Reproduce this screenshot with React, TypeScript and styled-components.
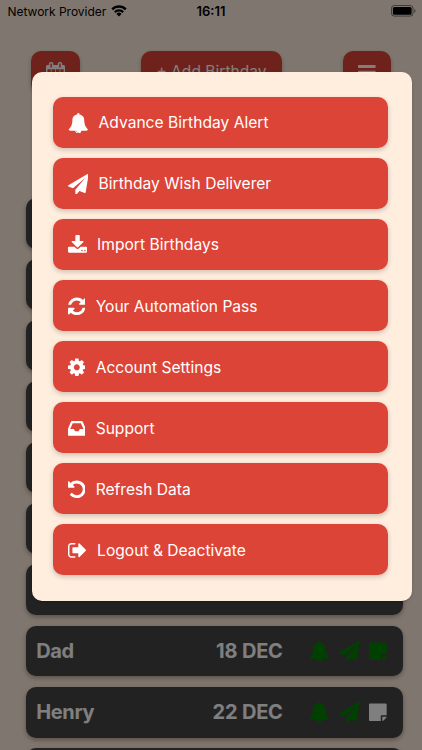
import React from "react";
import styled, { createGlobalStyle } from "styled-components";

const GlobalStyle = createGlobalStyle`
  * { box-sizing: border-box; }
  html, body { margin: 0; padding: 0; }
  body { font-family: Inter, "Liberation Sans", sans-serif; overflow: hidden; }
`;

const glyphs = {
  bell: { w: 1792, d: "M912 1696q0-16-16-16-59 0-101.5-42.5t-42.5-101.5q0-16-16-16t-16 16q0 73 51.5 124.5t124.5 51.5q16 0 16-16zm816-288q0 52-38 90t-90 38h-448q0 106-75 181t-181 75-181-75-75-181h-448q-52 0-90-38t-38-90q50-42 91-88t85-119.5 74.5-158.5 50-206 19.5-260q0-152 117-282.5t307-158.5q-8-19-8-39 0-40 28-68t68-28 68 28 28 68q0 20-8 39 190 28 307 158.5t117 282.5q0 139 19.5 260t50 206 74.5 158.5 85 119.5 91 88z" },
  plane: { w: 1792, d: "M1764 11q33 24 27 64l-256 1536q-5 29-32 45-14 8-31 8-11 0-24-5l-453-185-242 295q-18 23-49 23-13 0-22-4-19-7-30.5-23.5t-11.5-36.5v-349l864-1059-1069 925-395-162q-37-14-40-55-2-40 32-59l1664-960q15-9 32-9 20 0 36 11z" },
  download: { w: 1664, x: 64, d: "M1344 1344q0-26-19-45t-45-19-45 19-19 45 19 45 45 19 45-19 19-45zm256 0q0-26-19-45t-45-19-45 19-19 45 19 45 45 19 45-19 19-45zm128-224v320q0 40-28 68t-68 28h-1472q-40 0-68-28t-28-68v-320q0-40 28-68t68-28h465l135 136q58 56 136 56t136-56l136-136h464q40 0 68 28t28 68zm-325-569q17 41-14 70l-448 448q-18 19-45 19t-45-19l-448-448q-31-29-14-70 17-39 59-39h256v-448q0-26 19-45t45-19h256q26 0 45 19t19 45v448h256q42 0 59 39z" },
  refresh: { w: 1536, d: "M1511 1056q0 5-1 7-64 268-268 434.5t-478 166.5q-146 0-282.5-55t-243.5-157l-129 129q-19 19-45 19t-45-19-19-45v-448q0-26 19-45t45-19h448q26 0 45 19t19 45-19 45l-137 137q71 66 161 102t187 36q134 0 250-65t186-179q11-17 53-117 8-23 30-23h192q13 0 22.5 9.5t9.5 22.5zm25-800v448q0 26-19 45t-45 19h-448q-26 0-45-19t-19-45 19-45l138-138q-148-137-349-137-134 0-250 65t-186 179q-11 17-53 117-8 23-30 23h-199q-13 0-22.5-9.5t-9.5-22.5v-7q65-268 270-434.5t480-166.5q146 0 284 55.5t245 156.5l130-129q19-19 45-19t45 19 19 45z" },
  cog: { w: 1536, d: "M1024 896q0-106-75-181t-181-75-181 75-75 181 75 181 181 75 181-75 75-181zm512-109v222q0 12-8 23t-20 13l-185 28q-19 54-39 91 35 50 107 138 10 12 10 25t-9 23q-27 37-99 108t-94 71q-12 0-26-9l-138-108q-44 23-91 38-16 136-29 186-7 28-36 28h-222q-14 0-24.5-8.5t-11.5-21.5l-28-184q-49-16-90-37l-141 107q-10 9-25 9-14 0-25-11-126-114-165-168-7-10-7-23 0-12 8-23 15-21 51-66.5t54-70.5q-27-50-41-99l-183-27q-13-2-21-12.5t-8-23.5v-222q0-12 8-23t19-13l186-28q14-46 39-92-40-57-107-138-10-12-10-24 0-10 9-23 26-36 98.5-107.5t94.5-71.5q13 0 26 10l138 107q44-23 91-38 16-136 29-186 7-28 36-28h222q14 0 24.5 8.5t11.5 21.5l28 184q49 16 90 37l142-107q9-9 24-9 13 0 25 10 129 119 165 170 7 8 7 22 0 12-8 23-15 21-51 66.5t-54 70.5q26 50 41 98l183 28q13 2 21 12.5t8 23.5z" },
  inbox: { w: 1536, d: "M1023 960h316q-1-3-2.5-8.5t-2.5-7.5l-212-496h-708l-212 496q-1 3-2.5 8.5t-2.5 7.5h316l95 192h320zm513 30v482q0 26-19 45t-45 19h-1408q-26 0-45-19t-19-45v-482q0-62 25-123l238-552q10-25 36.5-42t52.5-17h832q26 0 52.5 17t36.5 42l238 552q25 61 25 123z" },
  undo: { w: 1536, d: "M1536 896q0 156-61 298t-164 245-245 164-298 61q-172 0-327-72.5t-264-204.5q-7-10-6.5-22.5t8.5-20.5l137-138q10-9 25-9 16 2 23 12 73 95 179 147t225 52q104 0 198.5-40.5t163.5-109.5 109.5-163.5 40.5-198.5-40.5-198.5-109.5-163.5-163.5-109.5-198.5-40.5q-98 0-188 35.5t-160 101.5l137 138q31 30 14 69-17 40-59 40h-448q-26 0-45-19t-19-45v-448q0-42 40-59 39-17 69 14l130 129q107-101 244.5-156.5t284.5-55.5q156 0 298 61t245 164 164 245 61 298z" },
  signOut: { w: 1664, d: "M640 1440q0 4 1 20t.5 26.5-3 23.5-10 19.5-20.5 6.5h-320q-119 0-203.5-84.5t-84.5-203.5v-704q0-119 84.5-203.5t203.5-84.5h320q13 0 22.5 9.5t9.5 22.5q0 4 1 20t.5 26.5-3 23.5-10 19.5-20.5 6.5h-320q-66 0-113 47t-47 113v704q0 66 47 113t113 47h312l11.5 1 11.5 3 8 5.5 7 9 2 13.5zm928-544q0 26-19 45l-544 544q-19 19-45 19t-45-19-19-45v-288h-448q-26 0-45-19t-19-45v-384q0-26 19-45t45-19h448v-288q0-26 19-45t45-19 45 19l544 544q19 19 19 45z" },
  note: { w: 1536, d: "M1024 1248v416h-928q-40 0-68-28t-28-68v-1344q0-40 28-68t68-28h1344q40 0 68 28t28 68v928h-416q-40 0-68 28t-28 68zm128 32h381q-15 82-65 132l-184 184q-50 50-132 65v-381z" },
  calendar: { w: 1664, d: "M128 1664h288v-288h-288v288zm352 0h320v-288h-320v288zm-352-352h288v-320h-288v320zm352 0h320v-320h-320v320zm-352-384h288v-288h-288v288zm736 736h320v-288h-320v288zm-384-736h320v-288h-320v288zm768 736h288v-288h-288v288zm-384-352h320v-320h-320v320zm-352-864v-288q0-13-9.5-22.5t-22.5-9.5h-64q-13 0-22.5 9.5t-9.5 22.5v288q0 13 9.5 22.5t22.5 9.5h64q13 0 22.5-9.5t9.5-22.5zm736 864h288v-320h-288v320zm-384-384h320v-288h-320v288zm384 0h288v-288h-288v288zm32-480v-288q0-13-9.5-22.5t-22.5-9.5h-64q-13 0-22.5 9.5t-9.5 22.5v288q0 13 9.5 22.5t22.5 9.5h64q13 0 22.5-9.5t9.5-22.5zm384-64v1280q0 52-38 90t-90 38h-1408q-52 0-90-38t-38-90v-1280q0-52 38-90t90-38h128v-96q0-66 47-113t113-47h64q66 0 113 47t47 113v96h384v-96q0-66 47-113t113-47h64q66 0 113 47t47 113v96h128q52 0 90 38t38 90z" },
  bars: { w: 1536, d: "M1536 1344v128q0 26-19 45t-45 19h-1408q-26 0-45-19t-19-45v-128q0-26 19-45t45-19h1408q26 0 45 19t19 45zm0-512v128q0 26-19 45t-45 19h-1408q-26 0-45-19t-19-45v-128q0-26 19-45t45-19h1408q26 0 45 19t19 45zm0-512v128q0 26-19 45t-45 19h-1408q-26 0-45-19t-19-45v-128q0-26 19-45t45-19h1408q26 0 45 19t19 45z" },
} as const;

type GlyphName = keyof typeof glyphs;

const Svg = styled.svg`
  display: block;
  flex: none;
  fill: currentColor;
`;

function Glyph({ name, size = 20.6 }: { name: GlyphName; size?: number }) {
  const g: { w: number; d: string; x?: number } = glyphs[name];
  return (
    <Svg width={(g.w / 1792) * size} height={size} viewBox={`${g.x ?? 0} 0 ${g.w} 1792`}>
      <path d={g.d} />
    </Svg>
  );
}

const Screen = styled.main`
  position: relative;
  width: 422px;
  height: 750px;
  overflow: hidden;
  background: #ffeede;
`;

const StatusBar = styled.header`
  display: grid;
  grid-template-columns: 1fr auto 1fr;
  align-items: center;
  height: 22px;
  padding: 0 6px 0 7.5px;
  font-size: 12px;
  color: #000;
`;

const Carrier = styled.div`
  display: flex;
  align-items: center;
  gap: 4.5px;
  letter-spacing: -0.02px;
`;

const Clock = styled.div`
  font-weight: 600;
  font-size: 13px;
  margin-right: 1.5px;
`;

const BatterySlot = styled.div`
  display: flex;
  justify-content: flex-end;
`;

const Toolbar = styled.nav`
  display: flex;
  justify-content: space-between;
  padding: 51px 31px 0;
`;

const ToolButton = styled.button<{ $width: number }>`
  display: flex;
  align-items: center;
  justify-content: center;
  width: ${(p) => p.$width}px;
  height: 42px;
  padding: 0;
  border: 0;
  border-radius: 10px;
  background: #dc4437;
  color: #fff;
  font: 400 15.6px Inter, sans-serif;
  white-space: nowrap;
  box-shadow: 0 2px 4px rgba(0, 0, 0, 0.25);
`;

const ToolLabel = styled.span`
  padding-bottom: 2px;
`;

const BirthdayList = styled.section`
  display: flex;
  flex-direction: column;
  gap: 10.2px;
  margin: 105px 19.5px 0 26px;
`;

const BirthdayRow = styled.article`
  display: flex;
  align-items: center;
  flex: none;
  height: 50.9px;
  padding: 0 15.6px 0 10.2px;
  border-radius: 10px;
  background: #454545;
  color: #fff;
  font-size: 20px;
  font-weight: 700;
  box-shadow: 0 2px 5px rgba(40, 0, 0, 0.35);
`;

const PersonName = styled.span`
  flex: 1;
  letter-spacing: -0.35px;
`;

const BirthDate = styled.span`
  margin-right: 26.2px;
  letter-spacing: -0.2px;
`;

const Indicators = styled.div`
  display: flex;
  align-items: center;
  gap: 9.6px;
`;

const Indicator = styled.span<{ $active: boolean }>`
  color: ${(p) => (p.$active ? "#008000" : "#fff")};
`;

const Backdrop = styled.div`
  position: absolute;
  inset: 0;
  padding: 71.5px 10.5px 0 32.3px;
  background: rgba(0, 0, 0, 0.5);
`;

const SystemLayer = styled.div`
  position: absolute;
  inset: 0 0 auto;
`;

const MenuPanel = styled.div`
  display: flex;
  flex-direction: column;
  gap: 10.2px;
  height: 529.5px;
  padding: 25.4px 23.8px 0 20.5px;
  border-radius: 10px;
  background: #ffeede;
  box-shadow: 0 1px 3px rgba(0, 0, 0, 0.2);
`;

const MenuItem = styled.button`
  display: flex;
  align-items: center;
  flex: none;
  gap: 10.3px;
  height: 50.9px;
  padding: 1px 14.9px 0;
  border: 0;
  border-radius: 10px;
  background: #dc4437;
  color: #fff;
  font: 400 15.6px Inter, sans-serif;
  box-shadow: 0 2px 5px rgba(0, 0, 0, 0.2);
`;

const menu: { icon: GlyphName; label: string }[] = [
  { icon: "bell", label: "Advance Birthday Alert" },
  { icon: "plane", label: "Birthday Wish Deliverer" },
  { icon: "download", label: "Import Birthdays" },
  { icon: "refresh", label: "Your Automation Pass" },
  { icon: "cog", label: "Account Settings" },
  { icon: "inbox", label: "Support" },
  { icon: "undo", label: "Refresh Data" },
  { icon: "signOut", label: "Logout & Deactivate" },
];

const people = [
  { name: "Dad", date: "18 DEC", note: true },
  { name: "Henry", date: "22 DEC", note: false },
];

const coveredRows = [0, 1, 2, 3, 4, 5, 6];

function WifiIcon() {
  return (
    <svg width="16" height="12" viewBox="0 0 16 12" fill="none" stroke="#000">
      <path d="M1.2 4.3a9.7 9.7 0 0 1 13.6 0" strokeWidth="2.4" />
      <path d="M3.8 7.1a6 6 0 0 1 8.4 0" strokeWidth="2.2" />
      <path d="M8 11.4 5.5 8.9a3.5 3.5 0 0 1 5 0z" fill="#000" stroke="none" />
    </svg>
  );
}

function BatteryIcon() {
  return (
    <svg width="25" height="12" viewBox="0 0 25 12">
      <rect x=".5" y=".5" width="21.5" height="10.6" rx="2.8" fill="none" stroke="#000" strokeOpacity=".5" />
      <rect x="1.9" y="1.9" width="18.7" height="7.8" rx="1.5" />
      <path d="M23.3 4v3.8c1.7-.7 1.7-3.1 0-3.8z" opacity=".5" />
    </svg>
  );
}

export default function App() {
  return (
    <>
      <GlobalStyle />
      <Screen>
        <Toolbar>
          <ToolButton $width={49}><Glyph name="calendar" /></ToolButton>
          <ToolButton $width={141}><ToolLabel>+ Add Birthday</ToolLabel></ToolButton>
          <ToolButton $width={48}><Glyph name="bars" /></ToolButton>
        </Toolbar>
        <BirthdayList>
          {coveredRows.map((row) => <BirthdayRow key={row} />)}
          {people.map((p) => (
            <BirthdayRow key={p.name}>
              <PersonName>{p.name}</PersonName>
              <BirthDate>{p.date}</BirthDate>
              <Indicators>
                <Indicator $active><Glyph name="bell" /></Indicator>
                <Indicator $active><Glyph name="plane" /></Indicator>
                <Indicator $active={p.note}><Glyph name="note" /></Indicator>
              </Indicators>
            </BirthdayRow>
          ))}
          <BirthdayRow />
        </BirthdayList>
        <Backdrop>
          <MenuPanel>
            {menu.map((item) => (
              <MenuItem key={item.label}>
                <Glyph name={item.icon} />
                <span>{item.label}</span>
              </MenuItem>
            ))}
          </MenuPanel>
        </Backdrop>
        <SystemLayer>
          <StatusBar>
            <Carrier>Network Provider <WifiIcon /></Carrier>
            <Clock>16:11</Clock>
            <BatterySlot><BatteryIcon /></BatterySlot>
          </StatusBar>
        </SystemLayer>
      </Screen>
    </>
  );
}
